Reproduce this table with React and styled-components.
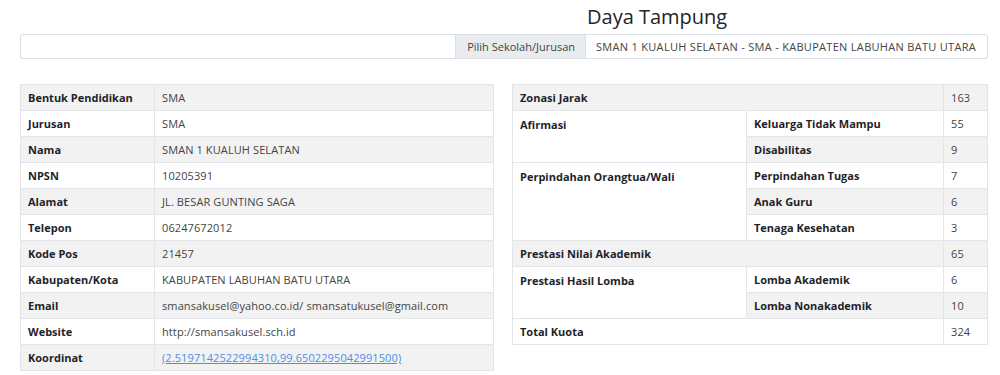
import React from "react";
import styled, { createGlobalStyle } from "styled-components";

const Global = createGlobalStyle`
  html, body { margin: 0; padding: 0; background: #fff; }
  body { font-family: "Open Sans", "Noto Sans", sans-serif; color: #333; }
  * { box-sizing: border-box; }
`;

const Page = styled.div`
  width: 1000px;
  height: 375px;
  padding: 5px 12px 0 20px;
  overflow: hidden;
`;

const Title = styled.h2`
  margin: 0;
  padding-left: 567px;
  font-size: 20px;
  line-height: 24px;
  font-weight: 500;
  color: #212529;
`;

const InputGroup = styled.div`
  margin-top: 5px;
  display: flex;
  height: 25px;
  width: 968px;
`;

const TextInput = styled.div`
  flex: 1;
  border: 1px solid #dcdfe3;
  border-right: none;
  border-radius: 3px 0 0 3px;
  background: #fff;
`;

const Addon = styled.div`
  display: flex;
  align-items: center;
  padding: 0 10px 0 11px;
  background: #e9ecef;
  border: 1px solid #dcdfe3;
  font-size: 11px;
  color: #444;
  white-space: nowrap;
`;

const SelectBox = styled.div`
  width: 402px;
  display: flex;
  align-items: center;
  padding: 0 10px;
  border: 1px solid #dcdfe3;
  border-left: none;
  border-radius: 0 3px 3px 0;
  font-size: 11px;
  color: #444;
  white-space: nowrap;
  letter-spacing: 0.3px;
`;

const Tables = styled.div`
  margin-top: 25px;
  display: grid;
  grid-template-columns: 474px 475px;
  column-gap: 18px;
  align-items: start;
`;

const Table = styled.table`
  width: 100%;
  border-collapse: collapse;
  table-layout: fixed;
  font-size: 11px;
  tbody tr:nth-of-type(odd) { background: #f2f2f2; }
`;

const Row = styled.tr``;

const Th = styled.td`
  border: 1px solid #e3e5e8;
  padding: 0 7px;
  height: 26px;
  font-weight: 700;
  color: #1f1f2a;
  letter-spacing: 0;
  vertical-align: ${(p) => (p.$top ? "top" : "middle")};
  padding-top: ${(p) => (p.$top ? "6px" : "0")};
  white-space: nowrap;
  width: ${(p) => p.$w || "auto"};
`;

const Td = styled.td`
  border: 1px solid #e3e5e8;
  padding: 0 7px;
  height: 26px;
  color: #444;
  letter-spacing: 0.1px;
  white-space: nowrap;
`;

const Link = styled.a`
  color: #4d8fe8;
  text-decoration: underline;
`;

const info = [
  ["Bentuk Pendidikan", "SMA"],
  ["Jurusan", "SMA"],
  ["Nama", "SMAN 1 KUALUH SELATAN"],
  ["NPSN", "10205391"],
  ["Alamat", "JL. BESAR GUNTING SAGA"],
  ["Telepon", "06247672012"],
  ["Kode Pos", "21457"],
  ["Kabupaten/Kota", "KABUPATEN LABUHAN BATU UTARA"],
  ["Email", "smansakusel@yahoo.co.id/ smansatukusel@gmail.com"],
  ["Website", "http://smansakusel.sch.id"],
];

export default function App() {
  return (
    <Page>
      <Global />
      <Title>Daya Tampung</Title>
      <InputGroup>
        <TextInput />
        <Addon>Pilih Sekolah/Jurusan</Addon>
        <SelectBox>SMAN 1 KUALUH SELATAN - SMA - KABUPATEN LABUHAN BATU UTARA</SelectBox>
      </InputGroup>
      <Tables>
        <Table>
          <tbody>
            {info.map(([k, v], i) => (
              <Row key={k}>
                <Th $w={i === 0 ? "134px" : undefined}>{k}</Th>
                <Td>{v}</Td>
              </Row>
            ))}
            <Row>
              <Th>Koordinat</Th>
              <Td>
                <Link href="#">(2.5197142522994310,99.6502295042991500)</Link>
              </Td>
            </Row>
          </tbody>
        </Table>
        <Table>
          <colgroup>
            <col style={{ width: "234px" }} />
            <col style={{ width: "197px" }} />
            <col style={{ width: "44px" }} />
          </colgroup>
          <tbody>
            <Row>
              <Th colSpan={2}>Zonasi Jarak</Th>
              <Td>163</Td>
            </Row>
            <Row>
              <Th rowSpan={2} $top>Afirmasi</Th>
              <Th>Keluarga Tidak Mampu</Th>
              <Td>55</Td>
            </Row>
            <Row>
              <Th>Disabilitas</Th>
              <Td>9</Td>
            </Row>
            <Row>
              <Th rowSpan={3} $top>Perpindahan Orangtua/Wali</Th>
              <Th>Perpindahan Tugas</Th>
              <Td>7</Td>
            </Row>
            <Row>
              <Th>Anak Guru</Th>
              <Td>6</Td>
            </Row>
            <Row>
              <Th>Tenaga Kesehatan</Th>
              <Td>3</Td>
            </Row>
            <Row>
              <Th colSpan={2}>Prestasi Nilai Akademik</Th>
              <Td>65</Td>
            </Row>
            <Row>
              <Th rowSpan={2} $top>Prestasi Hasil Lomba</Th>
              <Th>Lomba Akademik</Th>
              <Td>6</Td>
            </Row>
            <Row>
              <Th>Lomba Nonakademik</Th>
              <Td>10</Td>
            </Row>
            <Row>
              <Th colSpan={2}>Total Kuota</Th>
              <Td>324</Td>
            </Row>
          </tbody>
        </Table>
      </Tables>
    </Page>
  );
}
